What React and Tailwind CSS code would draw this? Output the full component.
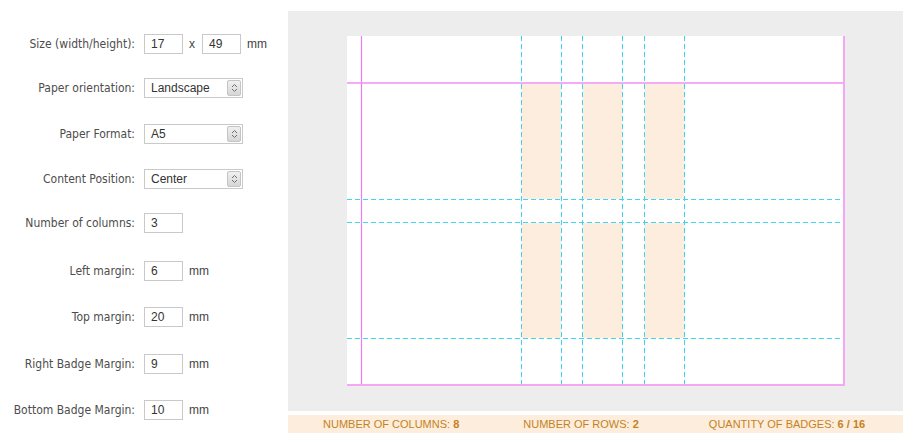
import React from 'react'

const labelFont = { fontFamily: '"DejaVu Sans Condensed", "DejaVu Sans", sans-serif' }

function TextBox({ value }) {
  return (
    <div className="flex h-[20px] w-[39px] items-center border border-[#c9c9c9] bg-white pl-[6px] text-[12px] text-[#333]">
      {value}
    </div>
  )
}

function SelectBox({ value }) {
  return (
    <div className="flex h-[20px] w-[99px] items-stretch border border-[#c9c9c9] bg-white text-[12px] text-[#333]">
      <div className="flex flex-1 items-center pl-[6px]">{value}</div>
      <div className="my-[1px] mr-[1px] flex w-[14px] items-center justify-center rounded-[2px] border border-[#c4c4c4] bg-gradient-to-b from-[#f0f0f0] to-[#d6d6d6]">
        <svg width="7" height="10" viewBox="0 0 7 10" fill="none" stroke="#6f6f6f" strokeWidth="1">
          <path d="M1 4 L3.5 1.5 L6 4" />
          <path d="M1 6 L3.5 8.5 L6 6" />
        </svg>
      </div>
    </div>
  )
}

function Row({ label, children, className }) {
  return (
    <div className={`flex h-[20px] items-center ${className}`}>
      <div className="w-[135px] text-right text-[12px] text-[#4d4d4d]" style={labelFont}>
        {label}
      </div>
      <div className="ml-[9px] flex items-center">{children}</div>
    </div>
  )
}

function Unit({ children }) {
  return <span className="ml-[6px] text-[12px] text-[#444]">{children}</span>
}

function Paper() {
  const vx = [174.5, 214.5, 235.5, 275.5, 297.5, 337.5]
  const hy = [163.5, 186.5, 302.5]
  const cols = [175, 236, 298]
  const rows = [48, 187]
  return (
    <svg width="498" height="350" viewBox="0 0 498 350" className="block">
      <rect x="0" y="0" width="498" height="350" fill="#fff" />
      {cols.map((x) =>
        rows.map((y) => (
          <rect key={`${x}-${y}`} x={x} y={y} width="39" height="115" fill="#fcedde" />
        ))
      )}
      <line x1="14.5" y1="0" x2="14.5" y2="350" stroke="#ee7cee" strokeWidth="1.2" />
      <line x1="0" y1="47" x2="498" y2="47" stroke="#f08ef0" strokeWidth="1.5" />
      <line x1="497" y1="0" x2="497" y2="350" stroke="#f5a6f5" strokeWidth="2" />
      <line x1="0" y1="349" x2="498" y2="349" stroke="#f5a6f5" strokeWidth="2" />
      {hy.map((y) => (
        <line key={y} x1="0" y1={y} x2="496" y2={y} stroke="#40d4f0" strokeWidth="1" strokeDasharray="5 3" />
      ))}
      {vx.map((x) => (
        <line key={x} x1={x} y1="0" x2={x} y2="348" stroke="#3dd3f0" strokeWidth="1" strokeDasharray="5 3" />
      ))}
    </svg>
  )
}

export default function App() {
  return (
    <div className="flex h-[446px] w-[914px] bg-white" style={{ fontFamily: '"Liberation Sans", Arial, sans-serif' }}>
      {/* Settings form */}
      <div className="flex w-[288px] flex-col pt-[34px]">
        <Row label="Size (width/height):">
          <TextBox value="17" />
          <span className="ml-[6px] mr-[7px] text-[12px] text-[#444]">x</span>
          <TextBox value="49" />
          <Unit>mm</Unit>
        </Row>
        <Row label="Paper orientation:" className="mt-[24px]">
          <SelectBox value="Landscape" />
        </Row>
        <Row label="Paper Format:" className="mt-[26px]">
          <SelectBox value="A5" />
        </Row>
        <Row label="Content Position:" className="mt-[25px]">
          <SelectBox value="Center" />
        </Row>
        <Row label="Number of columns:" className="mt-[24px]">
          <TextBox value="3" />
        </Row>
        <Row label="Left margin:" className="mt-[28px]">
          <TextBox value="6" />
          <Unit>mm</Unit>
        </Row>
        <Row label="Top margin:" className="mt-[26px]">
          <TextBox value="20" />
          <Unit>mm</Unit>
        </Row>
        <Row label="Right Badge Margin:" className="mt-[27px]">
          <TextBox value="9" />
          <Unit>mm</Unit>
        </Row>
        <Row label="Bottom Badge Margin:" className="mt-[26px]">
          <TextBox value="10" />
          <Unit>mm</Unit>
        </Row>
      </div>

      {/* Preview */}
      <div className="flex w-[615px] flex-col pt-[11px]">
        <div className="flex h-[400px] items-center justify-center bg-[#ededed]">
          <Paper />
        </div>
        <div className="mt-[4px] flex h-[18px] items-center bg-[#fdeddc] text-[11px] uppercase text-[#c5821c]">
          <span className="ml-[35px]">
            Number of columns: <b>8</b>
          </span>
          <span className="ml-[64px]">
            Number of rows: <b>2</b>
          </span>
          <span className="ml-[70px]">
            Quantity of badges: <b>6 / 16</b>
          </span>
        </div>
      </div>
    </div>
  )
}
